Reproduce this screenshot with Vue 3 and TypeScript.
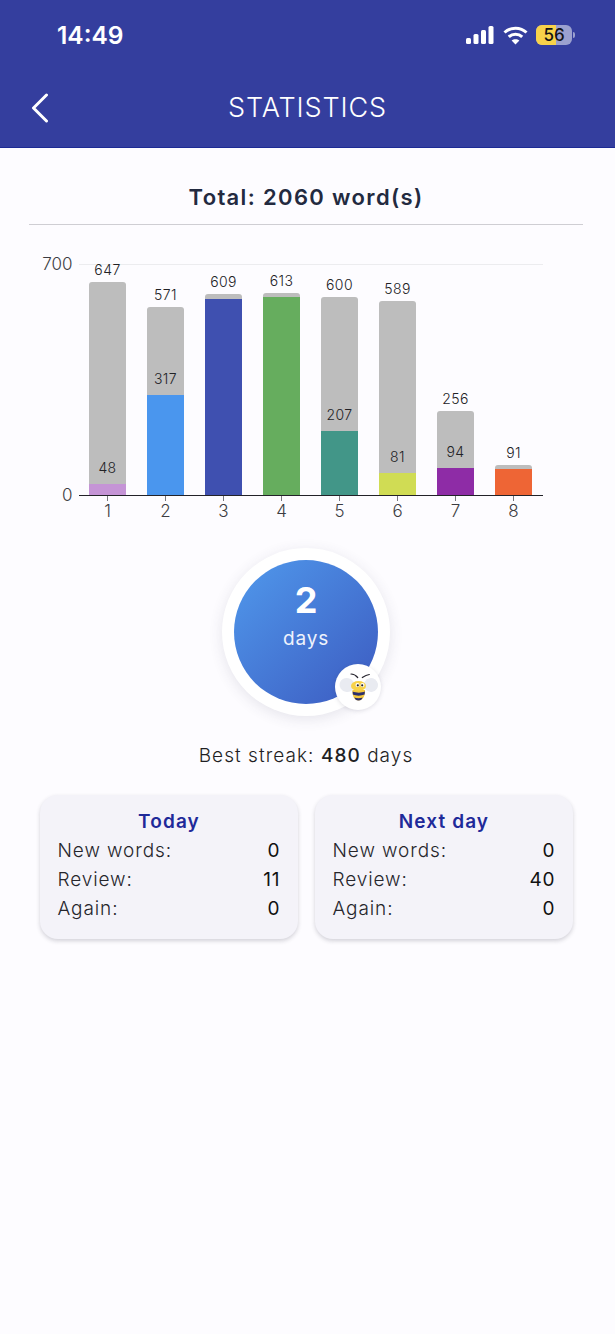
<script setup lang="ts">
type Bar = {
  level: number
  total: number
  done: number
  color: string
  showDone: boolean
}

const SCALE = 0.33

const bars: Bar[] = [
  { level: 1, total: 647, done: 48, color: '#c594d6', showDone: true },
  { level: 2, total: 571, done: 317, color: '#4a96ee', showDone: true },
  { level: 3, total: 609, done: 609, color: '#3f50b0', showDone: false },
  { level: 4, total: 613, done: 613, color: '#66ad5e', showDone: false },
  { level: 5, total: 600, done: 207, color: '#429688', showDone: true },
  { level: 6, total: 589, done: 81, color: '#d0dc54', showDone: true },
  { level: 7, total: 256, done: 94, color: '#8e2ca6', showDone: true },
  { level: 8, total: 91, done: 91, color: '#ee6535', showDone: false },
]

const cards = [
  { title: 'Today', newWords: 0, review: 11, again: 0 },
  { title: 'Next day', newWords: 0, review: 40, again: 0 },
]

const battery = 56

function px(value: number): string {
  return `${value * SCALE}px`
}

function fillPx(value: number): string {
  return `${value * SCALE - 4.5}px`
}
</script>

<template>
  <div class="page">
    <header class="header">
      <div class="status">
        <span class="status__time">14:49</span>
        <div class="status__icons">
          <svg width="28" height="18" viewBox="0 0 28 18" fill="#fff">
            <rect x="0" y="12" width="5" height="6" rx="1.5" />
            <rect x="7.500" y="8" width="5" height="10" rx="1.500" />
            <rect x="15" y="4" width="5" height="14" rx="1.500" />
            <rect x="22.500" y="0" width="5" height="18" rx="1.500" />
          </svg>
          <svg class="status__wifi" width="25" height="19" viewBox="0 0 25 19" fill="none" stroke="#fff" stroke-width="3">
            <path d="M1.500 6.500C7.500 0.800 17.500 0.800 23.500 6.500" />
            <path d="M5.800 10.800C9.500 7.300 15.500 7.300 19.200 10.800" />
            <path d="M12.500 18.500L8.600 14.600C10.800 12.700 14.200 12.700 16.400 14.600Z" fill="#fff" stroke="none" />
          </svg>
          <div class="battery">
            <div class="battery__body">
              <div class="battery__fill" :style="{ width: `${battery}%` }"></div>
              <span class="battery__text">{{ battery }}</span>
            </div>
            <div class="battery__nub"></div>
          </div>
        </div>
      </div>
      <div class="toolbar">
        <svg class="toolbar__back" width="18" height="30" viewBox="0 0 18 30" fill="none" stroke="#fff" stroke-width="3" stroke-linecap="round" stroke-linejoin="round">
          <path d="M15.500 2L2.500 15L15.500 28" />
        </svg>
        <h1 class="toolbar__title">STATISTICS</h1>
      </div>
    </header>

    <main>
      <h2 class="total">Total: 2060 word(s)</h2>

      <section class="chart">
        <div class="chart__main">
          <div class="chart__yaxis">
            <span>700</span>
            <span>0</span>
          </div>
          <div class="chart__plot">
            <div v-for="bar in bars" :key="bar.level" class="chart__col">
              <span class="chart__label chart__label--total">{{ bar.total }}</span>
              <div class="chart__bar" :style="{ height: px(bar.total) }">
                <span v-if="bar.showDone" class="chart__label chart__label--done">{{ bar.done }}</span>
                <div class="chart__fill" :style="{ height: fillPx(bar.done), background: bar.color }"></div>
              </div>
            </div>
          </div>
        </div>
        <div class="chart__xaxis">
          <span v-for="bar in bars" :key="bar.level" class="chart__tick">{{ bar.level }}</span>
        </div>
      </section>

      <section class="streak">
        <div class="streak__ring">
          <div class="streak__circle">
            <span class="streak__count">2</span>
            <span class="streak__unit">days</span>
          </div>
          <div class="streak__badge">
            <svg width="42" height="42" viewBox="0 0 42 42">
              <ellipse cx="10" cy="19" rx="7.500" ry="7" fill="#e9ebf1" transform="rotate(12 10 19)" />
              <ellipse cx="34" cy="19" rx="7" ry="7" fill="#e9ebf1" transform="rotate(-12 34 19)" />
              <path d="M15.500 24C15 29 17 34.500 21.500 34.500C26 34.500 28.500 29 28 24Z" fill="#f5c93e" />
              <path d="M15.600 25.500C19 27 24.500 27 27.900 25.500L27.600 28.500C24 30 19 30 15.900 28.500Z" fill="#2d2f6b" />
              <path d="M17.300 31.500C19.500 32.500 23.500 32.500 25.700 31.500L24.500 33.500C23 34.800 20 34.800 18.500 33.500Z" fill="#2d2f6b" />
              <ellipse cx="21.500" cy="20" rx="7.500" ry="5" fill="#f8d24a" />
              <circle cx="20.500" cy="19" r="2" fill="#fff" />
              <circle cx="25.500" cy="19" r="2" fill="#fff" />
              <circle cx="20.800" cy="19.300" r="1.100" fill="#1e1e2a" />
              <circle cx="25.200" cy="19.300" r="1.100" fill="#1e1e2a" />
              <path d="M14 8C16.500 8 19 9.500 20.700 11.500M32.300 8.500C30 8.800 27.500 10 25.300 11.500" fill="none" stroke="#26242e" stroke-width="1.200" stroke-linecap="round" />
            </svg>
          </div>
        </div>
        <p class="streak__best">Best streak: <b>480</b> days</p>
      </section>

      <section class="cards">
        <article v-for="card in cards" :key="card.title" class="card">
          <h3 class="card__title">{{ card.title }}</h3>
          <div class="card__row"><span>New words:</span><b>{{ card.newWords }}</b></div>
          <div class="card__row"><span>Review:</span><b>{{ card.review }}</b></div>
          <div class="card__row"><span>Again:</span><b>{{ card.again }}</b></div>
        </article>
      </section>
    </main>
  </div>
</template>

<style scoped>
.page {
  min-height: 1334px;
  background: #fdfcff;
  font-family: Inter, "Liberation Sans", sans-serif;
  color: #26262c;
}

.header {
  box-sizing: border-box;
  height: 148px;
  background: #343e9e;
  border-bottom: 1px solid #1c2a94;
  color: #fff;
}

.status {
  height: 70px;
  padding: 0 40px 0 57px;
  display: flex;
  justify-content: space-between;
  align-items: center;
}

.status__time {
  font-size: 24.500px;
  font-weight: 600;
}

.status__icons {
  display: flex;
  align-items: center;
}

.status__wifi {
  margin-left: 9px;
}

.battery {
  margin-left: 8px;
  display: flex;
  align-items: center;
}

.battery__body {
  position: relative;
  width: 36px;
  height: 20px;
  border-radius: 6px;
  background: #9ba1cf;
  overflow: hidden;
}

.battery__fill {
  height: 100%;
  background: #f8d24a;
}

.battery__text {
  position: absolute;
  inset: 0;
  text-align: center;
  font-size: 17px;
  font-weight: 500;
  line-height: 20px;
  color: #141414;
}

.battery__nub {
  width: 2px;
  height: 6px;
  margin-left: 1px;
  border-radius: 0 2px 2px 0;
  background: #9ba1cf;
}

.toolbar {
  position: relative;
  height: 77px;
  display: flex;
  align-items: center;
  justify-content: center;
}

.toolbar__back {
  position: absolute;
  left: 31px;
  top: 23px;
}

.toolbar__title {
  margin: 0 0 2px;
  font-size: 27px;
  font-weight: 300;
  letter-spacing: 0.900px;
}

.total {
  margin: 0 32px 0 29px;
  height: 77px;
  box-sizing: border-box;
  padding-top: 34px;
  border-bottom: 1px solid #cfced3;
  text-align: center;
  font-size: 22px;
  line-height: 30px;
  font-weight: 600;
  letter-spacing: 1.350px;
  color: #232a40;
}

.chart {
  margin-top: 39px;
  padding-left: 41.500px;
}

.chart__main {
  display: flex;
}

.chart__yaxis {
  width: 31px;
  margin: -11px 6px -10px 0;
  display: flex;
  flex-direction: column;
  justify-content: space-between;
  align-items: flex-end;
  font-size: 17px;
  line-height: 22px;
  font-weight: 300;
  color: #3c3c42;
}

.chart__plot {
  box-sizing: border-box;
  width: 464px;
  height: 232px;
  display: flex;
  border-top: 1px solid #ececef;
  border-bottom: 1.500px solid #222228;
}

.chart__col {
  flex: 1;
  display: flex;
  flex-direction: column;
  justify-content: flex-end;
  align-items: center;
}

.chart__label {
  flex-shrink: 0;
  font-size: 14px;
  line-height: 16px;
  font-weight: 300;
  letter-spacing: 0.400px;
  color: #222226;
}

.chart__label--total {
  margin-bottom: 4px;
}

.chart__label--done {
  margin-bottom: 8px;
}

.chart__bar {
  flex-shrink: 0;
  width: 37px;
  display: flex;
  flex-direction: column;
  justify-content: flex-end;
  align-items: center;
  border-radius: 3px 3px 0 0;
  background: #bdbdbd;
  overflow: hidden;
}

.chart__fill {
  width: 100%;
  flex-shrink: 0;
}

.chart__xaxis {
  margin-left: 37px;
  width: 464px;
  display: flex;
}

.chart__tick {
  flex: 1;
  text-align: center;
  font-size: 17px;
  line-height: 20px;
  font-weight: 300;
  color: #3c3c42;
}

.chart__tick::before {
  content: "";
  display: block;
  width: 1px;
  height: 5px;
  margin: 0 auto;
  background: #77777c;
}

.streak {
  margin-top: 27px;
  padding-right: 3px;
  display: flex;
  flex-direction: column;
  align-items: center;
}

.streak__ring {
  position: relative;
  box-sizing: border-box;
  width: 168px;
  height: 168px;
  padding: 12px;
  border-radius: 50%;
  background: #fff;
  box-shadow: 0 3px 14px rgba(60, 60, 90, 0.12);
}

.streak__circle {
  width: 144px;
  height: 144px;
  border-radius: 50%;
  display: flex;
  flex-direction: column;
  align-items: center;
  background: linear-gradient(135deg, #5099ec, #3c5ac0);
  color: #fff;
}

.streak__count {
  margin-top: 18px;
  font-size: 36px;
  line-height: 44px;
  font-weight: 700;
}

.streak__unit {
  margin-top: 5px;
  font-size: 19px;
  line-height: 24px;
  letter-spacing: 0.800px;
  color: #eef2fc;
}

.streak__badge {
  position: absolute;
  right: 9px;
  bottom: 6px;
  width: 46px;
  height: 46px;
  border-radius: 50%;
  background: #fff;
  display: flex;
  align-items: center;
  justify-content: center;
  box-shadow: 0 1px 4px rgba(60, 60, 90, 0.15);
}

.streak__best {
  margin: 28px 0 0;
  font-size: 19px;
  line-height: 24px;
  font-weight: 300;
  letter-spacing: 1.050px;
  color: #1f1f24;
}

.streak__best b {
  font-weight: 500;
}

.cards {
  margin-top: 27px;
  padding: 0 42.500px 0 39.500px;
  display: flex;
  justify-content: space-between;
}

.card {
  box-sizing: border-box;
  width: 258px;
  height: 144px;
  padding: 13px 17px 0 18px;
  border-radius: 18px;
  background: #f4f3f9;
  box-shadow: 0 2px 4px rgba(40, 40, 60, 0.2);
}

.card__title {
  margin: 0;
  text-align: center;
  font-size: 19px;
  line-height: 28px;
  font-weight: 600;
  letter-spacing: 1.100px;
  color: #1f2a99;
}

.card__row {
  display: flex;
  justify-content: space-between;
  font-size: 19px;
  line-height: 29px;
  font-weight: 300;
  letter-spacing: 0.900px;
}

.card__row b {
  font-weight: 400;
  color: #111;
}
</style>
